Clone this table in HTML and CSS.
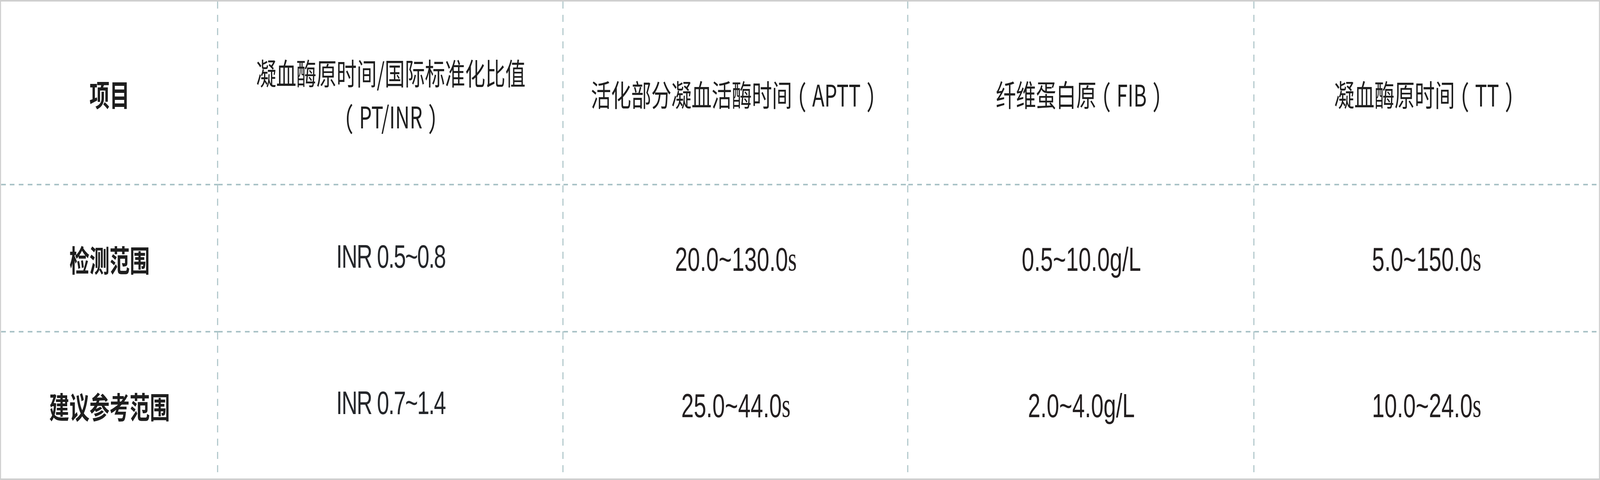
FILE: index.html
```html
<!DOCTYPE html>
<html lang="zh-CN">
<head>
<meta charset="utf-8">
<title>凝血检测项目</title>
<link rel="stylesheet" href="styles.css">
</head>
<body>
<div class="page">
  <div class="table">
    <div class="cell head label">项目</div>
    <div class="cell head"><div class="lines"><div>凝血酶原时间/国际标准化比值</div><div><span class="par">（</span>PT/INR<span class="par">）</span></div></div></div>
    <div class="cell head">活化部分凝血活酶时间<span class="par">（</span>APTT<span class="par">）</span></div>
    <div class="cell head">纤维蛋白原<span class="par">（</span>FIB<span class="par">）</span></div>
    <div class="cell head last-col">凝血酶原时间<span class="par">（</span>TT<span class="par">）</span></div>

    <div class="cell label">检测范围</div>
    <div class="cell val inr">INR 0.5~0.8</div>
    <div class="cell val">20.0~130.0<span class="unit">s</span></div>
    <div class="cell val">0.5~10.0g/L</div>
    <div class="cell val last-col">5.0~150.0<span class="unit">s</span></div>

    <div class="cell label last-row">建议参考范围</div>
    <div class="cell val inr last-row">INR 0.7~1.4</div>
    <div class="cell val last-row">25.0~44.0<span class="unit">s</span></div>
    <div class="cell val last-row">2.0~4.0g/L</div>
    <div class="cell val last-row last-col">10.0~24.0<span class="unit">s</span></div>
  </div>
</div>
</body>
</html>
```

FILE: styles.css
```css
html, body {
  margin: 0;
  padding: 0;
  background: #ffffff;
  overflow: hidden;
}

.page {
  width: 100%;
  height: 1230px;
  overflow: hidden;
}

.table {
  box-sizing: border-box;
  width: 6125px;
  height: 1230px;
  border: 4px solid #cfcfcf;
  display: grid;
  grid-template-columns: 831px 1322px 1320px 1325px 1fr;
  grid-template-rows: 471px 377px 1fr;
  background: #ffffff;
  transform-origin: 0 0;
  transform: scaleX(0.668735);
}

@media (min-width: 6100px) {
  .table {
    transform: none;
  }
}

.cell {
  display: flex;
  align-items: center;
  justify-content: center;
  text-align: center;
  color: #1e1e1e;
  font-family: "Noto Sans CJK SC", "Noto Sans", sans-serif;
  white-space: nowrap;
  background-image:
    repeating-linear-gradient(to bottom, #aac3c7 0 18px, transparent 18px 34px),
    repeating-linear-gradient(to right, #aac3c7 0 18px, transparent 18px 34px);
  background-size: 4px 100%, 100% 4px;
  background-position: right top, left bottom;
  background-repeat: no-repeat;
}

.cell.last-col {
  background-image:
    none,
    repeating-linear-gradient(to right, #aac3c7 0 18px, transparent 18px 34px);
}

.cell.last-row {
  background-image:
    repeating-linear-gradient(to bottom, #aac3c7 0 18px, transparent 18px 34px),
    none;
}

.cell.last-row.last-col {
  background-image: none;
}

.head {
  font-size: 77px;
  font-weight: 400;
  line-height: 1;
}

.lines {
  display: flex;
  flex-direction: column;
  align-items: center;
  gap: 34px;
}

/* full-width brackets drawn centred in their em box */
.par {
  font-feature-settings: "hwid" 1;
  padding: 0 0.25em;
}

.label {
  font-size: 77px;
  font-weight: 700;
  line-height: 1;
}

.val {
  font-family: "Liberation Sans", Arial, sans-serif;
  font-size: 86px;
  color: #231f20;
  line-height: 1;
}

.val.inr {
  font-size: 84px;
  letter-spacing: -3px;
  color: #25272b;
  padding-bottom: 14px;
}

.unit {
  font-family: "Liberation Serif", "Times New Roman", serif;
}
```
